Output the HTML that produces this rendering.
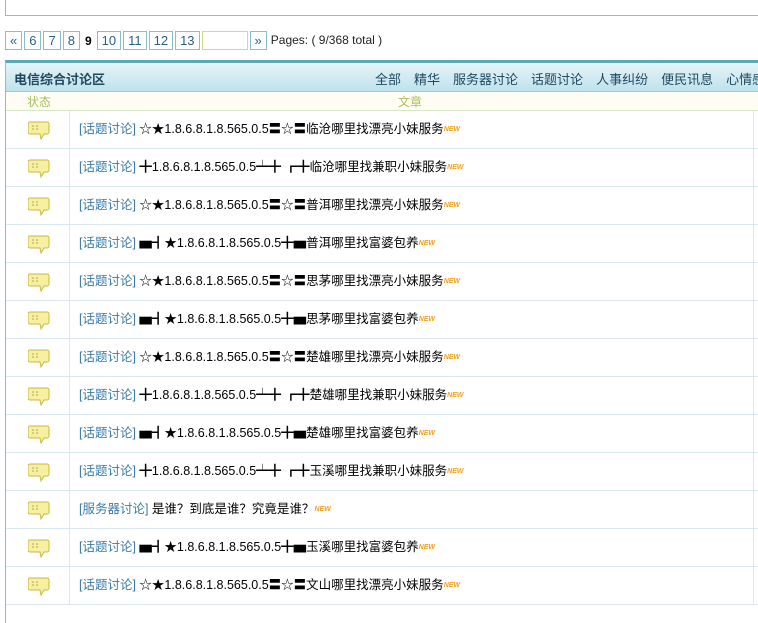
<!DOCTYPE html>
<html><head><meta charset="utf-8"><style>
body{margin:0;width:758px;height:612px;overflow:hidden;background:#fff;font-family:"Liberation Sans","Noto Sans CJK SC",sans-serif;font-size:12px;color:#000;position:relative}
.top{position:absolute;left:5px;top:-2px;width:800px;height:16px;border:1px solid #8fbcc8}
.pg{position:absolute;top:31px;left:5px;display:flex;align-items:center;height:19px}
.pg span{display:inline-block;border:1px solid #8fbcc8;height:17px;line-height:17px;padding:0 4px;margin-right:2px;color:#2a5f80;font-size:13px}
.pg b{margin:0 5px 0 3px;font-size:12px}
.pg .in{width:36px;border-color:#cfd98a}
.pg .t{border:none;color:#222;font-size:12px;padding:0 2px}
.tb{position:absolute;left:5px;top:60px;width:800px;height:560px;border-left:1px solid #8fbcc8;border-top:3px solid #5aaab8}
.hd{height:28px;background:linear-gradient(#e6f4f8,#bfe2ec);border-bottom:1px solid #9ccad6;position:relative}
.hd .ti{position:absolute;left:8px;top:6px;font-weight:bold;color:#1d4a60;font-size:13px}
.hd .nv{position:absolute;left:369px;top:6px;color:#1d4a60;font-size:13px;white-space:nowrap}
.hd .nv i{font-style:normal;margin-right:13px}
.sh{height:18px;background:#fffdf3;border-bottom:1px solid #d8e6c8;position:relative;color:#a8c060;font-size:12px}
.row{height:37px;border-bottom:1px solid #d8e8ee;position:relative}
.row .c{position:absolute;left:63px;top:0;bottom:-1px;border-left:1px solid #d8e8ee}
.row .r{position:absolute;left:747px;top:0;bottom:-1px;border-left:1px solid #d8e8ee}
.row .tx{position:absolute;left:73px;top:11px;font-size:12.5px;line-height:15px;white-space:nowrap}
.row .tx a{color:#3a7aa8}
.ic{position:absolute;left:22px;top:10px}
.nw{display:inline-block;font-size:7px;line-height:8px;font-weight:bold;color:#f0a020;font-style:italic;vertical-align:2px}
</style></head><body>
<div class="top"></div>
<div class="pg"><span>«</span><span>6</span><span>7</span><span>8</span><b>9</b><span>10</span><span>11</span><span>12</span><span>13</span><span class="in"></span><span>»</span><span class="t">Pages: ( 9/368 total )</span></div>
<div class="tb">
<div class="hd"><span class="ti">电信综合讨论区</span><span class="nv"><i>全部</i><i>精华</i><i>服务器讨论</i><i>话题讨论</i><i>人事纠纷</i><i>便民讯息</i><i>心情感</i></span></div>
<div class="sh"><span style="position:absolute;left:21px;top:1px">状态</span><span style="position:absolute;left:392px;top:1px">文章</span></div>
<div id="rows"></div>
</div>
<script>
var d=[["[话题讨论]","☆★1.8.6.8.1.8.565.0.5〓☆〓临沧哪里找漂亮小妹服务"],
["[话题讨论]","╋1.8.6.8.1.8.565.0.5┷╋ ┏╋临沧哪里找兼职小妹服务"],
["[话题讨论]","☆★1.8.6.8.1.8.565.0.5〓☆〓普洱哪里找漂亮小妹服务"],
["[话题讨论]","▅┫★1.8.6.8.1.8.565.0.5╋▅普洱哪里找富婆包养"],
["[话题讨论]","☆★1.8.6.8.1.8.565.0.5〓☆〓思茅哪里找漂亮小妹服务"],
["[话题讨论]","▅┫★1.8.6.8.1.8.565.0.5╋▅思茅哪里找富婆包养"],
["[话题讨论]","☆★1.8.6.8.1.8.565.0.5〓☆〓楚雄哪里找漂亮小妹服务"],
["[话题讨论]","╋1.8.6.8.1.8.565.0.5┷╋ ┏╋楚雄哪里找兼职小妹服务"],
["[话题讨论]","▅┫★1.8.6.8.1.8.565.0.5╋▅楚雄哪里找富婆包养"],
["[话题讨论]","╋1.8.6.8.1.8.565.0.5┷╋ ┏╋玉溪哪里找兼职小妹服务"],
["[服务器讨论]","是谁？到底是谁？究竟是谁？"],
["[话题讨论]","▅┫★1.8.6.8.1.8.565.0.5╋▅玉溪哪里找富婆包养"],
["[话题讨论]","☆★1.8.6.8.1.8.565.0.5〓☆〓文山哪里找漂亮小妹服务"]];
var ic='<svg class="ic" width="22" height="19" viewBox="0 0 22 19"><path d="M2 1h17a2 2 0 0 1 2 2v8a2 2 0 0 1-2 2h-3l-3 5-1-5H2a2 2 0 0 1-2-2V3a2 2 0 0 1 2-2z" fill="#f6f0a0" stroke="#c8b840"/><path d="M4 5h2M8 5h2M4 8h2M8 8h2" stroke="#b0a860"/></svg>';
var h='';d.forEach(function(r){h+='<div class="row">'+ic+'<div class="c"></div><div class="r"></div><div class="tx"><a>'+r[0]+'</a> '+r[1]+'<span class="nw">NEW</span></div></div>'});
document.getElementById('rows').innerHTML=h;
</script>
</body></html>
